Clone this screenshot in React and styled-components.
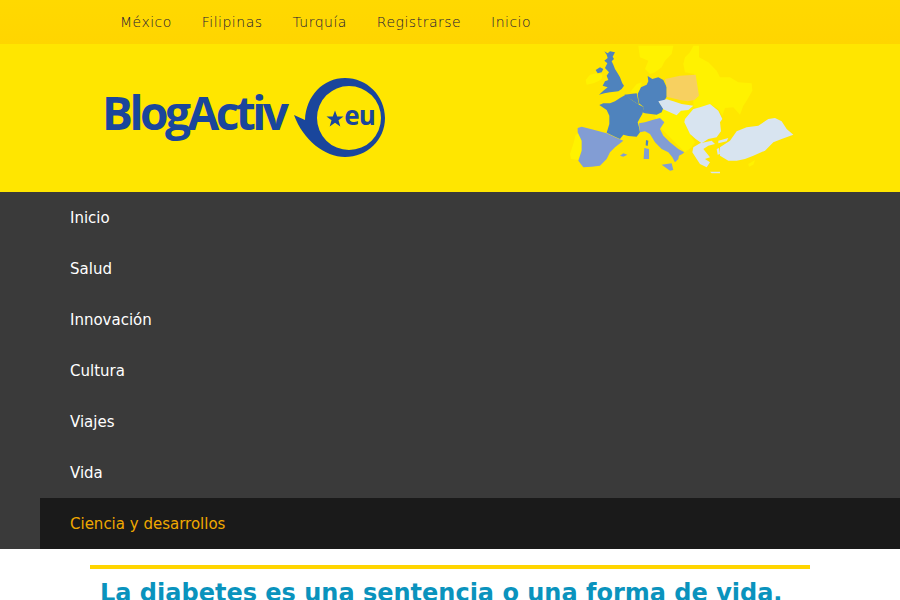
import styled, { createGlobalStyle } from "styled-components";

const GlobalStyle = createGlobalStyle`
    html, body {
        margin: 0;
        padding: 0;
        background: #fff;
        height: 600px;
        overflow: hidden;
    }
    body {
        font-family: "DejaVu Sans", sans-serif;
    }
`;

const TopBar = styled.div`
    height: 44px;
    background: linear-gradient(#ffd900, #ffd500);
`;

const TopNav = styled.ul`
    display: flex;
    gap: 29.9px;
    list-style: none;
    margin: 0;
    padding: 0 0 0 120px;
`;

const TopLink = styled.li`
    font-family: "DejaVu Sans", sans-serif;
    font-weight: 200;
    font-size: 14px;
    line-height: 44px;
    color: #15123a;
    letter-spacing: 0.5px;
`;

const Header = styled.div`
    display: flex;
    height: 148px;
    background: #ffe600;
`;

const Logo = styled.div`
    display: flex;
    align-items: flex-start;
    width: 303px;
    margin-left: 102px;
    padding-top: 34px;
`;

const LogoText = styled.span`
    font-family: "Open Sans", sans-serif;
    font-weight: 700;
    font-size: 46px;
    line-height: 68px;
    letter-spacing: -3.5px;
    color: #1a469c;
`;

const Badge = styled.div`
    position: relative;
    width: 92px;
    height: 80px;
    margin-left: 8.8px;
`;

const BadgeText = styled.span`
    position: absolute;
    left: 50px;
    top: 19px;
    font-family: "Open Sans", sans-serif;
    font-weight: 700;
    font-size: 26px;
    line-height: 36px;
    letter-spacing: -1px;
    color: #1a469c;
`;

const MapBox = styled.svg`
    display: block;
    margin-left: 160px;
`;

const Menu = styled.ul`
    list-style: none;
    margin: 0;
    padding: 0 0 0 40px;
    background: #3a3a3a;
`;

const MenuItem = styled.li`
    box-sizing: border-box;
    height: 51px;
    padding: 1px 0 0 30px;
    line-height: 51px;
    font-size: 15px;
    color: ${(p) => (p.$active ? "#f0a800" : "#fff")};
    background: ${(p) => (p.$active ? "#1a1a1a" : "transparent")};
`;

const Article = styled.div`
    margin: 16px 90px 0;
    border-top: 4px solid #ffd500;
    padding: 8px 10px 0;
`;

const Title = styled.h1`
    margin: 0;
    font-size: 24px;
    line-height: 32px;
    font-weight: 700;
    color: #0a93bd;
    white-space: nowrap;
`;

const topLinks = ["México", "Filipinas", "Turquía", "Registrarse", "Inicio"];
const menuLinks = ["Inicio", "Salud", "Innovación", "Cultura", "Viajes", "Vida"];

const PALE = "#fff200";
const BLUE = "#4f83bd";
const LILAC = "#829dd4";
const ICE = "#d8e4f0";

// traced from crops of the map, so each group keeps its own origin at 3x
const westShapes = [
    [PALE, "220,5 325,5 320,30 300,50 290,70 270,85 255,90 240,75 250,50 225,40"],
    [PALE, "62,108 75,92 95,88 112,92 110,105 100,112 85,118 65,122"],
    [PALE, "195,145 215,120 230,115 228,130 218,150"],
    [PALE, "32,272 42,268 50,290 50,320 40,348 18,345 15,330 25,300"],
    [BLUE, "118,22 128,28 135,22 150,25 143,38 147,45 140,52 145,62 150,75 158,88 165,100 172,118 177,125 170,135 160,142 135,145 118,148 102,152 115,140 128,130 113,125 120,112 130,108 125,95 132,85 120,72 127,58 118,50 128,42 125,32"],
    [BLUE, "92,78 105,70 115,75 110,85 98,88"],
    [BLUE, "182,152 200,168 222,182 237,190 232,210 225,222 218,235 222,250 225,265 215,278 190,276 175,272 165,285 150,278 125,266 133,240 133,215 125,198 103,183 115,178 135,178 150,172 165,162"],
    [BLUE, "178,152 215,148 220,172 222,182 200,168"],
    [BLUE, "248,96 262,105 280,100 295,108 305,130 305,158 298,170 282,175 295,192 290,205 275,212 240,208 232,205 237,190 222,178 218,150 228,130 245,122 250,112"],
    [LILAC, "38,252 50,248 80,256 125,268 150,280 175,290 150,310 135,325 125,345 105,365 80,368 55,370 40,350 50,320 50,290 38,265"],
    [LILAC, "222,238 240,235 262,228 285,222 298,235 285,255 295,275 315,295 340,315 358,325 352,330 342,335 340,345 330,355 322,340 310,325 290,315 270,295 255,270 240,262 225,265"],
    [LILAC, "290,362 320,358 325,378 315,380"],
    [LILAC, "238,312 252,315 252,345 236,345"],
    [BLUE, "243,288 250,290 248,306 242,304"],
    [LILAC, "165,335 175,328 187,332 175,338"],
    ["#f7d060", "300,105 345,95 392,92 398,130 402,155 388,168 368,172 345,168 305,158 305,130"],
    [ICE, "280,172 305,166 325,172 350,180 385,185 370,198 348,200 335,214 318,206 295,196"],
];

const eastShapes = [
    [PALE, "25,60 30,40 45,25 55,5 72,5 72,40 100,55 125,80 135,100 165,100 190,115 230,118 232,140 215,170 205,185 195,212 175,190 150,192 142,215 130,195 105,180 80,195 55,190 55,170 65,150 58,120 58,90 30,85"],
    [PALE, "-60,185 -20,175 30,190 55,190 55,200 30,225 30,240 45,270 60,295 50,310 30,325 5,300 -20,275 -45,250 -60,215"],
    [ICE, "55,195 75,190 105,180 130,200 142,225 135,235 138,262 125,280 100,285 80,298 62,285 45,270 28,235 30,225"],
    [ICE, "55,310 75,298 110,290 120,300 100,305 85,315 105,340 90,345 105,355 95,370 75,360 65,345 52,325"],
    [ICE, "135,310 165,290 185,262 215,250 250,245 280,225 300,222 320,232 335,255 355,272 320,285 295,295 270,320 235,335 210,345 185,350 160,350 135,335"],
    [ICE, "130,290 160,282 155,292 130,298"],
    [ICE, "105,383 135,383 135,388 110,388"],
    [ICE, "125,315 132,312 135,330 128,332"],
    [PALE, "220,360 240,348 235,362 222,368"],
];

const EuropeMap = () => (
    <MapBox width="240" height="148" viewBox="565 44 240 148">
        <g transform="translate(675 44) scale(0.3333)">
            {eastShapes.slice(0, 2).map(([fill, points]) => (
                <polygon key={points} fill={fill} points={points} />
            ))}
        </g>
        <g transform="translate(565 44) scale(0.3333)">
            {westShapes.map(([fill, points]) => (
                <polygon key={points} fill={fill} points={points} />
            ))}
        </g>
        <g transform="translate(675 44) scale(0.3333)">
            {eastShapes.slice(2).map(([fill, points]) => (
                <polygon key={points} fill={fill} points={points} />
            ))}
        </g>
    </MapBox>
);

export default function App() {
    return (
        <>
            <GlobalStyle />
            <TopBar>
                <TopNav>
                    {topLinks.map((l) => (
                        <TopLink key={l}>{l}</TopLink>
                    ))}
                </TopNav>
            </TopBar>
            <Header>
                <Logo>
                    <LogoText>BlogActiv</LogoText>
                    <Badge>
                        <svg width="92" height="80" viewBox="294 78 92 80">
                            <path
                                fill="#1a469c"
                                fillRule="evenodd"
                                d="M294 115L305 120C306 96 323 78 345 78C367 78 385 96 385 118C385 140 367 157 345 157C325 157 303 140 294 115ZM349 86a32 32 0 1 0 0 64a32 32 0 1 0 0 -64Z"
                            />
                            <polygon
                                fill="#1a469c"
                                points="335,110.5 337.2,116.5 343.5,116.5 338.5,120.3 340.3,126.5 335,122.8 329.7,126.5 331.5,120.3 326.5,116.5 332.8,116.5"
                            />
                        </svg>
                        <BadgeText>eu</BadgeText>
                    </Badge>
                </Logo>
                <EuropeMap />
            </Header>
            <Menu>
                {menuLinks.map((l) => (
                    <MenuItem key={l}>{l}</MenuItem>
                ))}
                <MenuItem $active>Ciencia y desarrollos</MenuItem>
            </Menu>
            <Article>
                <Title>La diabetes es una sentencia o una forma de vida.</Title>
            </Article>
        </>
    );
}
